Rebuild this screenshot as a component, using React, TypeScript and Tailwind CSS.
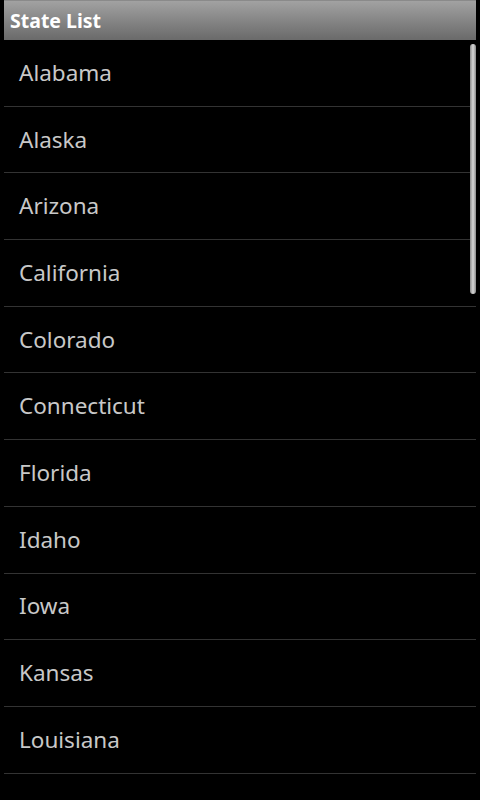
const states = [
  'Alabama',
  'Alaska',
  'Arizona',
  'California',
  'Colorado',
  'Connecticut',
  'Florida',
  'Idaho',
  'Iowa',
  'Kansas',
  'Louisiana',
];

const App = () => {
  return (
    <div
      className="relative h-[800px] w-[480px] overflow-hidden bg-black"
      style={{ fontFamily: '"Noto Sans", "DejaVu Sans", sans-serif' }}
    >
      <div className="mx-[4px] flex h-[40px] items-center bg-gradient-to-b from-[#a2a2a2] to-[#6a6a6a] border-t border-[#8a8a8a] pl-[6px]">
        <span className="text-[19.5px] font-bold text-white">State List</span>
      </div>

      {/* list */}
      <div className="mx-[4px]">
        {states.map((s) => (
          <div
            key={s}
            className="flex h-[66.7px] items-center border-b border-[#333333] pl-[15px]"
          >
            <span className="text-[22.5px] text-[#c8c8c8]">{s}</span>
          </div>
        ))}
      </div>

      {/* scrollbar */}
      <div className="absolute left-[470px] top-[44px] h-[250px] w-[6px] rounded-full bg-gradient-to-r from-[#8a8a8a] via-[#d8d8d8] to-[#8a8a8a]" />
    </div>
  );
};

export default App;
